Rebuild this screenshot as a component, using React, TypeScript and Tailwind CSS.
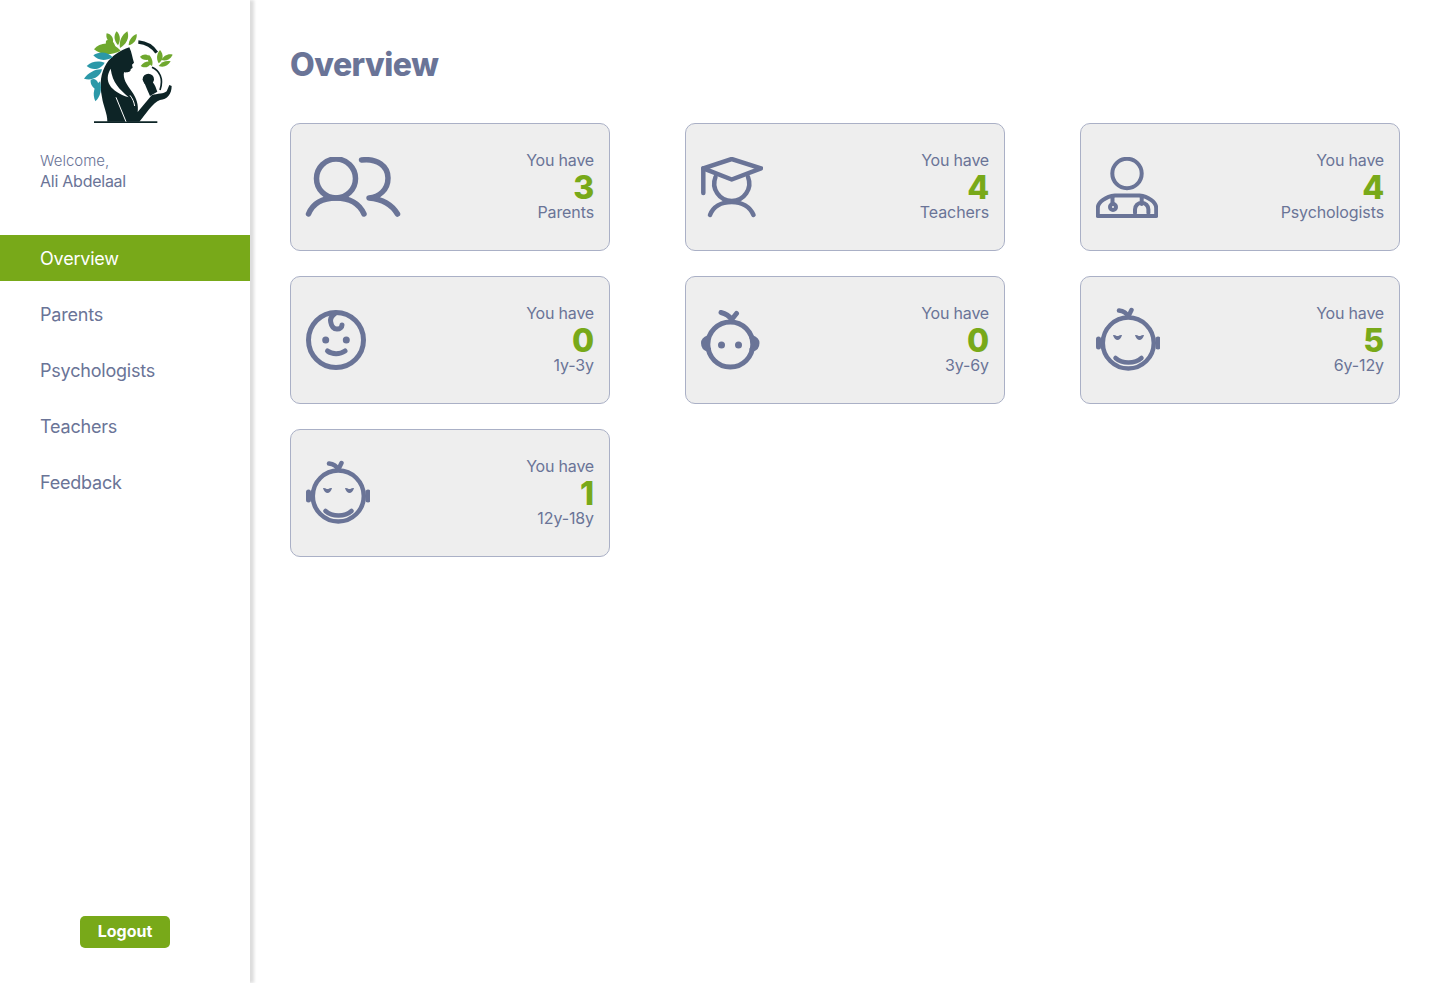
import type { ReactNode } from 'react'

const navLinks = ['Overview', 'Parents', 'Psychologists', 'Teachers', 'Feedback']

function Leaf({ d, fill }: { d: string; fill: string }) {
  return <path d={d} fill={fill} />
}

// logo, drawn in 3x coords
function Logo() {
  const green = '#6fa82e'
  const teal = '#2b98a8'
  const dark = '#0d2426'
  return (
    <svg width="120" height="115" viewBox="0 0 360 345">
      <path fill={dark} d="M178 82C186 98 187 114 192 128L186 134L188 143L182 148C183 156 172 158 162 157C158 175 170 195 186 215C200 235 206 255 203 276L245 226C262 220 282 222 290 214L298 195L305 198C305 222 292 238 270 240C250 246 225 285 208 305L112 305C112 280 100 260 96 232C88 190 92 160 110 130C125 108 150 92 178 82Z" />
      <path fill={dark} d="M72 304H262V309H72Z" />
      <path fill="#fff" d="M122 146C100 182 120 214 176 232C148 206 128 190 122 146Z" />
      <path fill="none" stroke="#fff" strokeWidth="3" d="M138 232L168 305M180 226C188 236 192 246 194 258" />
      <circle cx="235" cy="178" r="17" fill={dark} />
      <path fill={dark} d="M222 186L248 186C256 196 258 205 262 215L240 228L232 210Z" />
      <path fill="none" stroke={dark} strokeWidth="10" d="M205 66C228 68 248 80 260 98" />
      <path fill="none" stroke={dark} strokeWidth="5" d="M246 142C268 152 282 175 270 210" />
      <Leaf fill={green} d="M72 88C90 66 125 62 152 92C125 106 92 106 72 88Z" />
      <Leaf fill={green} d="M108 62C126 50 138 76 138 92C120 94 104 82 108 62Z" />
      <Leaf fill={green} d="M110 40C126 42 132 58 128 70C114 66 106 54 110 40Z" />
      <Leaf fill={green} d="M140 34C152 46 152 62 144 76C132 62 130 46 140 34Z" />
      <Leaf fill={green} d="M172 34C180 54 168 74 150 84C146 64 156 44 172 34Z" />
      <Leaf fill={green} d="M200 42C202 58 192 72 176 76C176 60 186 48 200 42Z" />
      <Leaf fill={teal} d="M70 106C90 92 114 96 128 112C106 124 84 122 70 106Z" />
      <Leaf fill={teal} d="M50 138C65 122 88 122 104 128C92 150 66 152 50 138Z" />
      <Leaf fill={teal} d="M42 176C56 156 80 146 96 148C92 170 66 184 42 176Z" />
      <Leaf fill={teal} d="M62 180C78 170 90 190 86 212C72 208 60 196 62 180Z" />
      <Leaf fill={teal} d="M76 244C66 222 72 198 90 184C96 208 92 230 76 244Z" />
      <Leaf fill={green} d="M210 110C224 98 238 104 242 118C228 122 216 120 210 110Z" />
      <Leaf fill={green} d="M212 138C222 124 238 122 244 128C238 142 222 146 212 138Z" />
      <Leaf fill={green} d="M236 104C246 112 250 126 246 138C236 132 230 118 236 104Z" />
      <Leaf fill={green} d="M270 90C282 104 280 120 266 130C258 116 260 102 270 90Z" />
      <Leaf fill={green} d="M308 104C300 120 286 124 274 120C280 108 294 100 308 104Z" />
      <Leaf fill={green} d="M302 124C294 138 280 144 266 138C274 126 288 120 302 124Z" />
    </svg>
  )
}

function IconBase({ w, h, children }: { w: number; h: number; children: ReactNode }) {
  return (
    <svg width={w} height={h} viewBox={`0 0 ${w} ${h}`} fill="none" stroke="#6a7497" strokeLinecap="round" strokeLinejoin="round">
      {children}
    </svg>
  )
}

const ParentsIcon = () => (
  <IconBase w={96} h={60}>
    <g strokeWidth="5.5">
      <circle cx="31" cy="21.5" r="19.5" />
      <path d="M3.5 57C8 46 18 41 31 41C44 41 54 46 59 57" />
      <path d="M56.5 3C72 1 83 9 83 21C83 33 74 40 64 41C75 42 86 46 92.5 57" />
    </g>
  </IconBase>
)

const TeachersIcon = () => (
  <IconBase w={62} h={61}>
    <g strokeWidth="4.5">
      <path d="M2.3 11.3L30.7 2L60 11.3L30.7 22.5Z" />
      <path d="M2.3 11.3V36" />
      <path d="M14.5 20A17.5 17.5 0 1 0 47 20" />
      <path d="M9 58C12 50 20 45 30.7 45C41 45 49 50 52.5 58" />
    </g>
  </IconBase>
)

const PsychologistsIcon = () => (
  <IconBase w={62} h={61}>
    <g strokeWidth="4">
      <circle cx="31" cy="16.5" r="14.7" />
      <path d="M1.8 59H60.2V51C60.2 45 52 39.5 43.5 38.5H19C10 39.5 1.8 45 1.8 51Z" />
      <path d="M16.5 39.5V46" />
      <circle cx="17" cy="50" r="3" />
      <path d="M45.7 39.5V47M39 56V52.5A6.7 6.7 0 0 1 52.4 52.5V56" />
    </g>
  </IconBase>
)

const Baby1Icon = () => (
  <IconBase w={60} h={60}>
    <g strokeWidth="5">
      <circle cx="30" cy="30" r="27.5" />
      <path d="M29 3.5C25.5 6 24 9 24.7 12C25.5 16.5 28 19 31 19C34 19 36 17 36 15" />
      <path d="M21.5 41C26 44.5 34 44.5 39 41" />
    </g>
    <circle cx="19.7" cy="30" r="3.5" fill="#6a7497" stroke="none" />
    <circle cx="40.3" cy="30" r="3.5" fill="#6a7497" stroke="none" />
  </IconBase>
)

const Baby2Icon = () => (
  <IconBase w={59} h={60}>
    <g strokeWidth="5">
      <circle cx="29.3" cy="34.5" r="22.5" />
      <path d="M7.5 27.5C3.5 29 2.5 31.5 2.5 33C2.5 36 4 38.5 7.5 39.5" />
      <path d="M51 27.5C55 29 56 31.5 56 33C56 36 54.5 38.5 51 39.5" />
      <path d="M20 2.5C24 3.5 28 5.5 30.7 9.5L35.5 3.5" />
    </g>
    <circle cx="20.5" cy="35" r="3.5" fill="#6a7497" stroke="none" />
    <circle cx="37.5" cy="35" r="3.5" fill="#6a7497" stroke="none" />
  </IconBase>
)

const Baby3Icon = () => (
  <IconBase w={64} h={66}>
    <g strokeWidth="4.5">
      <circle cx="32.3" cy="36" r="25.5" />
      <path d="M23 3.5C27 4 30.5 6 32.3 9.5L35.5 3" />
      <path d="M2.5 32V40M62 32V40" strokeWidth="5" />
      <path d="M19.5 51C26 57 39 57 45.5 51" />
    </g>
    <path d="M17 28C19.5 27.5 20 29 21.5 29C23 29 23.5 27.5 26 28C25.5 31 23 33 21.5 33C20 33 17.5 31 17 28Z" fill="#6a7497" stroke="none" />
    <path d="M39 28C41.5 27.5 42 29 43.5 29C45 29 45.5 27.5 48 28C47.5 31 45 33 43.5 33C42 33 39.5 31 39 28Z" fill="#6a7497" stroke="none" />
  </IconBase>
)

const cards = [
  { icon: <div className="-ml-px"><ParentsIcon /></div>, count: 3, label: 'Parents' },
  { icon: <TeachersIcon />, count: 4, label: 'Teachers' },
  { icon: <PsychologistsIcon />, count: 4, label: 'Psychologists' },
  { icon: <Baby1Icon />, count: 0, label: '1y-3y' },
  { icon: <Baby2Icon />, count: 0, label: '3y-6y' },
  { icon: <Baby3Icon />, count: 5, label: '6y-12y' },
  { icon: <Baby3Icon />, count: 1, label: '12y-18y' },
]

function StatCard({ icon, count, label }: { icon: ReactNode; count: number; label: string }) {
  return (
    <div className="flex h-[128px] w-[320px] items-center justify-between rounded-[10px] border border-[#aab0c6] bg-[#eeeeee] px-[15px]">
      {icon}
      <div className="flex flex-col items-end text-[16px] tracking-[-0.2px] text-[#6a7497]">
        <span className="leading-[22px]">You have</span>
        <span className="mt-[2px] text-[32px] font-extrabold leading-[30px] text-[#78a919]">{count}</span>
        <span className="mb-[4px] leading-[18px] tracking-[-0.1px]">{label}</span>
      </div>
    </div>
  )
}

export default function App() {
  return (
    <div className="flex h-[983px] bg-white font-['Inter',sans-serif] text-[#6a7497]">
      <aside className="flex w-[250px] shrink-0 flex-col shadow-[4px_0_3px_#dddddd]">
        <div className="pl-[70px] pt-[20px]">
          <Logo />
        </div>
        <div className="pl-[40px] pt-[15px]">
          <p className="text-[15px] font-light leading-[21px]">Welcome,</p>
          <p className="text-[16px] leading-[21px] tracking-[-0.25px]">Ali Abdelaal</p>
        </div>
        <nav className="mt-[43px] flex flex-col gap-[10px]">
          {navLinks.map((link, i) => (
            <a
              key={link}
              href="#"
              className={`flex h-[46px] items-center pl-[40px] text-[18px] tracking-[-0.2px] ${i === 0 ? 'bg-[#78a919] text-white' : ''}`}
            >
              {link}
            </a>
          ))}
        </nav>
        <button
          type="button"
          className="mx-auto mb-[35px] mt-auto h-[32px] w-[90px] rounded-[5px] bg-[#78a919] pb-[2px] text-[16px] font-bold text-white"
        >
          Logout
        </button>
      </aside>

      <main className="flex-1 pl-[40px] pt-[42px]">
        <h1 className="mb-[35px] text-[32px] font-extrabold leading-[46px] tracking-[-0.5px]">Overview</h1>
        <div className="grid grid-cols-[320px_320px_320px] gap-x-[75px] gap-y-[25px]">
          {cards.map((card) => (
            <StatCard key={card.label} {...card} />
          ))}
        </div>
      </main>
    </div>
  )
}
